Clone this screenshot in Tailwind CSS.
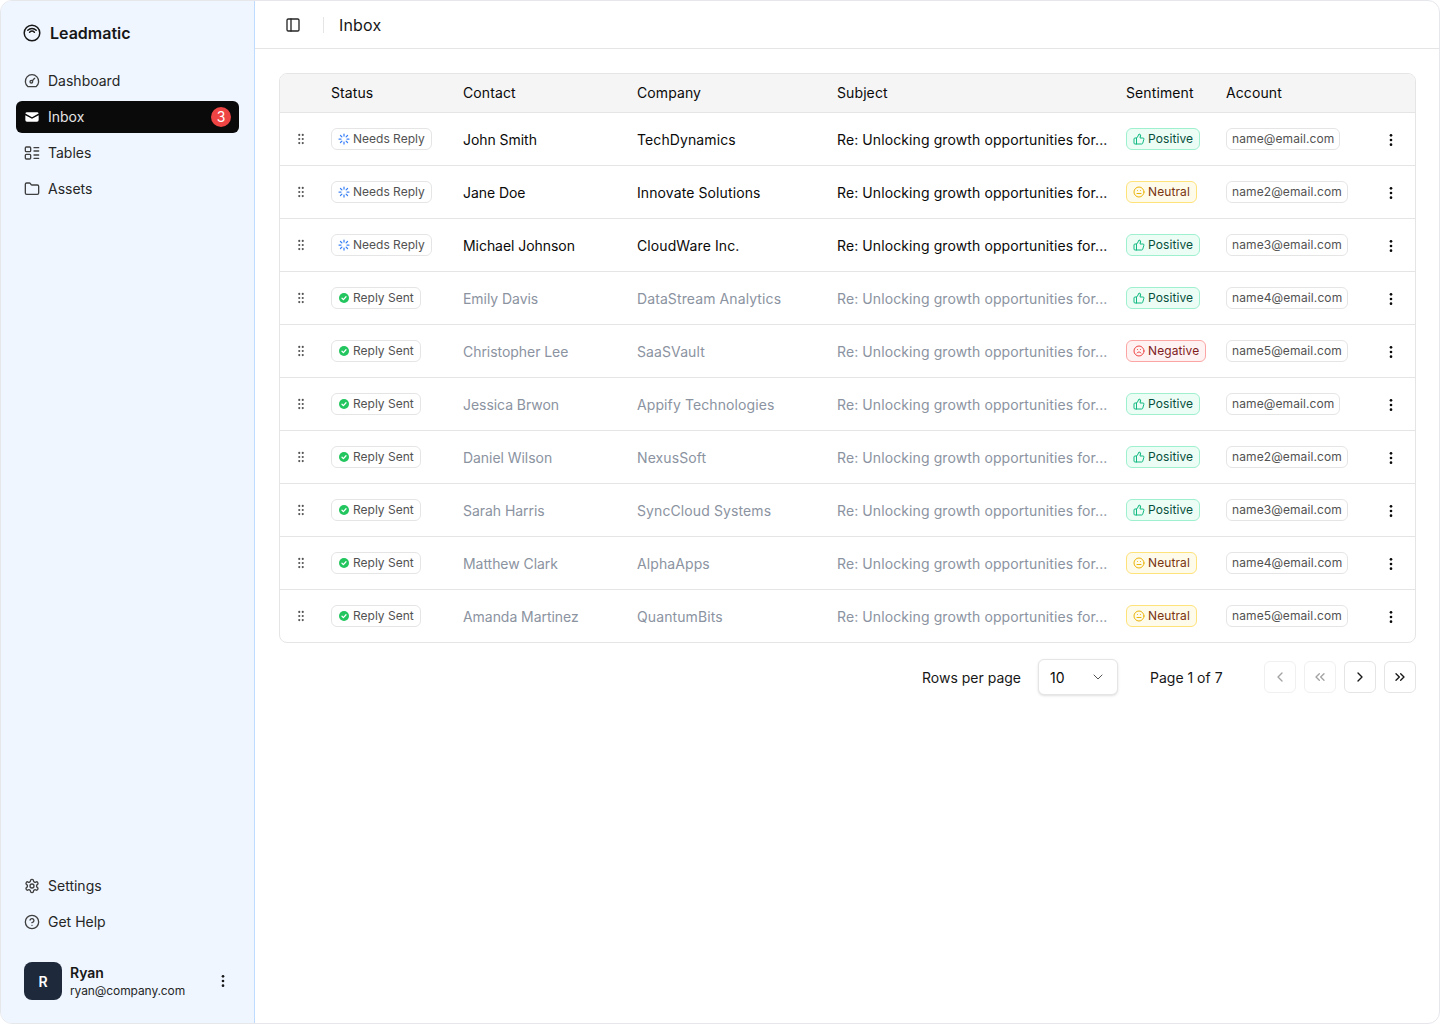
<!DOCTYPE html>
<html lang="en">
<head>
  <meta charset="UTF-8">
  <meta name="viewport" content="width=device-width, initial-scale=1.0">
  <title>Leadmatic Inbox</title>
  <script src="https://cdn.jsdelivr.net/npm/@tailwindcss/browser@4"></script>
</head>
<body class="bg-white font-['Inter',sans-serif] text-[14px] text-[#0a0a0a]">
  <div class="flex h-[1024px] w-[1440px] overflow-hidden rounded-[12px] border border-[#e5e7eb]">

    <!-- Sidebar -->
    <aside class="flex w-[254px] shrink-0 flex-col border-r border-[#bfdbfe] bg-[#eff6ff] px-[15px]">
      <div class="mt-[16px] flex h-[32px] items-center gap-[9px] px-[7px]">
        <svg class="size-[18px]" viewBox="0 0 18 18" fill="none" stroke="#171717" stroke-width="1.5" stroke-linecap="round"><circle cx="9" cy="9" r="7.8"/><path d="M4.8 6.2a6 6 0 0 1 8.4 0"/><path d="M6.6 8.2a3.4 3.4 0 0 1 4.8 0"/></svg>
        <span class="text-[16px] font-semibold text-[#171717]">Leadmatic</span>
      </div>
      <nav class="mt-[16px] flex flex-col gap-[4px] leading-[20px]">
        <a class="flex h-[32px] items-center gap-[8px] rounded-[6px] px-[8px] text-[#262626]">
          <svg class="size-[16px]" viewBox="0 0 24 24" fill="none" stroke="#404040" stroke-width="2" stroke-linecap="round" stroke-linejoin="round"><path d="M6 20.500a10 10 0 1 1 12 0z"/><circle cx="11" cy="13" r="2"/><path d="M12.500 11.500 16 8"/></svg>
          Dashboard
        </a>
        <a class="flex h-[32px] items-center gap-[8px] rounded-[6px] bg-[#0a0a0a] pl-[8px] pr-[8px] text-white">
          <svg class="size-[16px]" viewBox="0 0 24 24" fill="white"><path d="M4.500 5h15A2.500 2.500 0 0 1 22 6.800l-10 5.700L2 6.800A2.500 2.500 0 0 1 4.500 5z"/><path d="M2 9.200v7.300A2.500 2.500 0 0 0 4.500 19h15a2.500 2.500 0 0 0 2.500-2.500V9.200l-10 5.600z"/></svg>
          <span class="flex-1 text-[#e5e5e5]">Inbox</span>
          <span class="flex size-[20px] items-center justify-center rounded-full bg-[#ef4444] text-[14px] text-white">3</span>
        </a>
        <a class="flex h-[32px] items-center gap-[8px] rounded-[6px] px-[8px] text-[#262626]">
          <svg class="size-[16px]" viewBox="0 0 24 24" fill="none" stroke="#404040" stroke-width="2" stroke-linecap="round" stroke-linejoin="round"><rect x="2" y="3" width="8" height="7" rx="1.500"/><rect x="2" y="14" width="8" height="7" rx="1.500"/><path d="M15 4h7M15 9h7M15 15h7M15 20h7"/></svg>
          Tables
        </a>
        <a class="flex h-[32px] items-center gap-[8px] rounded-[6px] px-[8px] text-[#262626]">
          <svg class="size-[16px]" viewBox="0 0 24 24" fill="none" stroke="#404040" stroke-width="2" stroke-linecap="round" stroke-linejoin="round"><path d="M20 20a2 2 0 0 0 2-2V8a2 2 0 0 0-2-2h-7.900a2 2 0 0 1-1.690-.9L9.600 3.900A2 2 0 0 0 7.930 3H4a2 2 0 0 0-2 2v13a2 2 0 0 0 2 2Z"/></svg>
          Assets
        </a>
      </nav>
      <div class="mt-auto flex flex-col gap-[4px] leading-[20px]">
        <a class="flex h-[32px] items-center gap-[8px] rounded-[6px] px-[8px] text-[#262626]">
          <svg class="size-[16px]" viewBox="0 0 24 24" fill="none" stroke="#404040" stroke-width="2" stroke-linecap="round" stroke-linejoin="round"><path d="M12.220 2h-.44a2 2 0 0 0-2 2v.18a2 2 0 0 1-1 1.730l-.43.25a2 2 0 0 1-2 0l-.15-.08a2 2 0 0 0-2.730.73l-.22.38a2 2 0 0 0 .73 2.730l.15.1a2 2 0 0 1 1 1.720v.51a2 2 0 0 1-1 1.740l-.15.09a2 2 0 0 0-.73 2.730l.22.38a2 2 0 0 0 2.730.73l.15-.08a2 2 0 0 1 2 0l.43.25a2 2 0 0 1 1 1.730V20a2 2 0 0 0 2 2h.44a2 2 0 0 0 2-2v-.18a2 2 0 0 1 1-1.730l.43-.25a2 2 0 0 1 2 0l.15.08a2 2 0 0 0 2.730-.73l.22-.39a2 2 0 0 0-.73-2.730l-.15-.08a2 2 0 0 1-1-1.740v-.5a2 2 0 0 1 1-1.740l.15-.09a2 2 0 0 0 .73-2.730l-.22-.38a2 2 0 0 0-2.730-.73l-.15.08a2 2 0 0 1-2 0l-.43-.25a2 2 0 0 1-1-1.730V4a2 2 0 0 0-2-2z"/><circle cx="12" cy="12" r="3"/></svg>
          Settings
        </a>
        <a class="flex h-[32px] items-center gap-[8px] rounded-[6px] px-[8px] text-[#262626]">
          <svg class="size-[16px]" viewBox="0 0 24 24" fill="none" stroke="#404040" stroke-width="2" stroke-linecap="round" stroke-linejoin="round"><circle cx="12" cy="12" r="10"/><path d="M9.090 9a3 3 0 0 1 5.830 1c0 2-3 3-3 3"/><path d="M12 17h.01"/></svg>
          Get Help
        </a>
      </div>
      <div class="mb-[23px] mt-[24px] flex items-center gap-[8px] px-[8px]">
        <div class="flex size-[38px] items-center justify-center rounded-[8px] bg-[#1e293b] text-[14px] font-semibold text-white">R</div>
        <div class="mt-[2px] flex-1 leading-[18px]">
          <div class="font-semibold text-[#171717]">Ryan</div>
          <div class="text-[12px] tracking-[-0.1px] text-[#262626]">ryan@company.com</div>
        </div>
        <svg class="size-[16px]" viewBox="0 0 24 24" fill="#171717"><circle cx="12" cy="5" r="2"/><circle cx="12" cy="12" r="2"/><circle cx="12" cy="19" r="2"/></svg>
      </div>
    </aside>

    <!-- Main -->
    <main class="flex min-w-0 flex-1 flex-col">
      <header class="flex h-[48px] shrink-0 items-center border-b border-[#e5e5e5] pl-[30px]">
        <svg class="size-[16px]" viewBox="0 0 24 24" fill="none" stroke="#262626" stroke-width="2" stroke-linecap="round" stroke-linejoin="round"><rect x="3" y="3" width="18" height="18" rx="2"/><path d="M9 3v18"/></svg>
        <div class="ml-[22px] h-[16px] w-px bg-[#e5e5e5]"></div>
        <h1 class="ml-[15px] text-[16px] tracking-[0.15px] text-[#171717]">Inbox</h1>
      </header>

      <div class="pl-[24px] pr-[23px] pt-[24px]">
        <div class="overflow-hidden rounded-[8px] border border-[#e5e5e5]">
          <table class="w-full table-fixed border-collapse">
            <colgroup>
              <col class="w-[51px]"><col class="w-[132px]"><col class="w-[174px]"><col class="w-[200px]"><col class="w-[289px]"><col class="w-[100px]"><col class="w-[150px]"><col>
            </colgroup>
            <thead>
              <tr class="h-[38px] border-b border-[#e5e5e5] bg-[#f5f5f5] text-left tracking-[0.1px] text-[#0a0a0a]">
                <th class="font-normal"></th>
                <th class="font-normal">Status</th>
                <th class="font-normal">Contact</th>
                <th class="font-normal">Company</th>
                <th class="font-normal">Subject</th>
                <th class="font-normal">Sentiment</th>
                <th class="font-normal">Account</th>
                <th class="font-normal"></th>
              </tr>
            </thead>
            <tbody id="rows"></tbody>
          </table>
        </div>

        <div class="mt-[16px] flex items-center justify-end">
          <span class="text-[#171717]">Rows per page</span>
          <div class="ml-[17px] flex h-[36px] w-[80px] items-center justify-between rounded-[6px] border border-[#e5e5e5] bg-white pl-[11px] pr-[11px] shadow-sm">
            10
            <svg class="size-[16px]" viewBox="0 0 24 24" fill="none" stroke="#525252" stroke-width="1.500" stroke-linecap="round" stroke-linejoin="round"><path d="m6 9 6 6 6-6"/></svg>
          </div>
          <span class="ml-[32px] w-[74px] text-[#171717]">Page 1 of 7</span>
          <div class="ml-[40px] flex gap-[8px]">
            <button class="flex size-[32px] items-center justify-center rounded-[6px] border border-[#f0f0f0]"><svg class="size-[16px]" viewBox="0 0 24 24" fill="none" stroke="#a3a3a3" stroke-width="2" stroke-linecap="round" stroke-linejoin="round"><path d="m15 18-6-6 6-6"/></svg></button>
            <button class="flex size-[32px] items-center justify-center rounded-[6px] border border-[#f0f0f0]"><svg class="size-[16px]" viewBox="0 0 24 24" fill="none" stroke="#a3a3a3" stroke-width="2" stroke-linecap="round" stroke-linejoin="round"><path d="m11 17-5-5 5-5"/><path d="m18 17-5-5 5-5"/></svg></button>
            <button class="flex size-[32px] items-center justify-center rounded-[6px] border border-[#e5e5e5]"><svg class="size-[16px]" viewBox="0 0 24 24" fill="none" stroke="#171717" stroke-width="2" stroke-linecap="round" stroke-linejoin="round"><path d="m9 18 6-6-6-6"/></svg></button>
            <button class="flex size-[32px] items-center justify-center rounded-[6px] border border-[#e5e5e5]"><svg class="size-[16px]" viewBox="0 0 24 24" fill="none" stroke="#171717" stroke-width="2" stroke-linecap="round" stroke-linejoin="round"><path d="m6 17 5-5-5-5"/><path d="m13 17 5-5-5-5"/></svg></button>
          </div>
        </div>
      </div>
    </main>
  </div>

  <script>
    const rows = [
      ['John Smith', 'TechDynamics', 'pos', 'name@email.com', true],
      ['Jane Doe', 'Innovate Solutions', 'neu', 'name2@email.com', true],
      ['Michael Johnson', 'CloudWare Inc.', 'pos', 'name3@email.com', true],
      ['Emily Davis', 'DataStream Analytics', 'pos', 'name4@email.com', false],
      ['Christopher Lee', 'SaaSVault', 'neg', 'name5@email.com', false],
      ['Jessica Brwon', 'Appify Technologies', 'pos', 'name@email.com', false],
      ['Daniel Wilson', 'NexusSoft', 'pos', 'name2@email.com', false],
      ['Sarah Harris', 'SyncCloud Systems', 'pos', 'name3@email.com', false],
      ['Matthew Clark', 'AlphaApps', 'neu', 'name4@email.com', false],
      ['Amanda Martinez', 'QuantumBits', 'neu', 'name5@email.com', false],
    ];

    const pill = 'inline-flex h-[22px] items-center gap-[3px] rounded-[6px] border text-[12px] align-middle';

    const sentiments = {
      pos: {
        label: 'Positive',
        cls: 'border-[#9ef0cf] bg-[#ecfdf5] text-[#064e3b]',
        icon: '<svg class="size-[12px]" viewBox="0 0 24 24" fill="none" stroke="#10b981" stroke-width="2" stroke-linecap="round" stroke-linejoin="round"><path d="M7 10v12"/><path d="M15 5.880 14 10h5.830a2 2 0 0 1 1.920 2.560l-2.330 8A2 2 0 0 1 17.500 22H4a2 2 0 0 1-2-2v-8a2 2 0 0 1 2-2h2.760a2 2 0 0 0 1.790-1.110L12 2a3.130 3.130 0 0 1 3 3.880Z"/></svg>',
      },
      neu: {
        label: 'Neutral',
        cls: 'border-[#fee27a] bg-[#fffbeb] text-[#78350f]',
        icon: '<svg class="size-[12px]" viewBox="0 0 24 24" fill="none" stroke="#eab308" stroke-width="2" stroke-linecap="round" stroke-linejoin="round"><circle cx="12" cy="12" r="10"/><path d="M8 15h8"/><path d="M9 9h.01"/><path d="M15 9h.01"/></svg>',
      },
      neg: {
        label: 'Negative',
        cls: 'border-[#fca5a5] bg-[#fef2f2] text-[#7f1d1d]',
        icon: '<svg class="size-[12px]" viewBox="0 0 24 24" fill="none" stroke="#ef4444" stroke-width="2" stroke-linecap="round" stroke-linejoin="round"><circle cx="12" cy="12" r="10"/><path d="M16 16s-1.500-2-4-2-4 2-4 2"/><path d="M9 9h.01"/><path d="M15 9h.01"/></svg>',
      },
    };

    const needsReply = '<svg class="size-[12px]" viewBox="0 0 24 24" fill="none" stroke="#3b82f6" stroke-width="2.500" stroke-linecap="round"><path d="M12 2v4M12 18v4M4.930 4.930l2.830 2.830M16.240 16.240l2.830 2.830M2 12h4M18 12h4M4.930 19.070l2.830-2.830M16.240 7.760l2.830-2.830"/></svg>';
    const replySent = '<svg class="size-[12px]" viewBox="0 0 24 24"><circle cx="12" cy="12" r="10" fill="#22c55e"/><path d="m8 12.500 2.800 2.800 5.200-5.800" fill="none" stroke="white" stroke-width="2.500" stroke-linecap="round" stroke-linejoin="round"/></svg>';

    document.getElementById('rows').innerHTML = rows.map(([name, company, mood, account, open]) => {
      const s = sentiments[mood];
      const tone = open ? 'text-[#0a0a0a]' : 'text-[#8b93a1]';
      return `<tr class="h-[53px] border-b border-[#e5e5e5] last:border-b-0 ${tone}">
        <td class="pl-[14px] pt-px"><svg class="block size-[14px]" viewBox="0 0 24 24" fill="#525252"><circle cx="9" cy="5" r="1.800"/><circle cx="15" cy="5" r="1.800"/><circle cx="9" cy="12" r="1.800"/><circle cx="15" cy="12" r="1.800"/><circle cx="9" cy="19" r="1.800"/><circle cx="15" cy="19" r="1.800"/></svg></td>
        <td><span class="${pill} border-[#e5e5e5] bg-white px-[6px] text-[#525252]">${open ? needsReply : replySent}${open ? 'Needs Reply' : 'Reply Sent'}</span></td>
        <td class="pt-px tracking-[-0.05px]">${name}</td>
        <td class="pt-px tracking-[0.1px]">${company}</td>
        <td class="truncate pr-[16px] pt-px tracking-[0.1px]">Re: Unlocking growth opportunities for...</td>
        <td><span class="${pill} ${s.cls} px-[6px] tracking-[0.1px]">${s.icon}${s.label}</span></td>
        <td><span class="${pill} border-[#e5e5e5] bg-white px-[5px] tracking-[0.1px] text-[#525252]">${account}</span></td>
        <td class="pl-[7px] pt-[2px]"><svg class="block size-[16px]" viewBox="0 0 24 24" fill="#0a0a0a"><circle cx="12" cy="5" r="2"/><circle cx="12" cy="12" r="2"/><circle cx="12" cy="19" r="2"/></svg></td>
      </tr>`;
    }).join('');
  </script>
</body>
</html>
